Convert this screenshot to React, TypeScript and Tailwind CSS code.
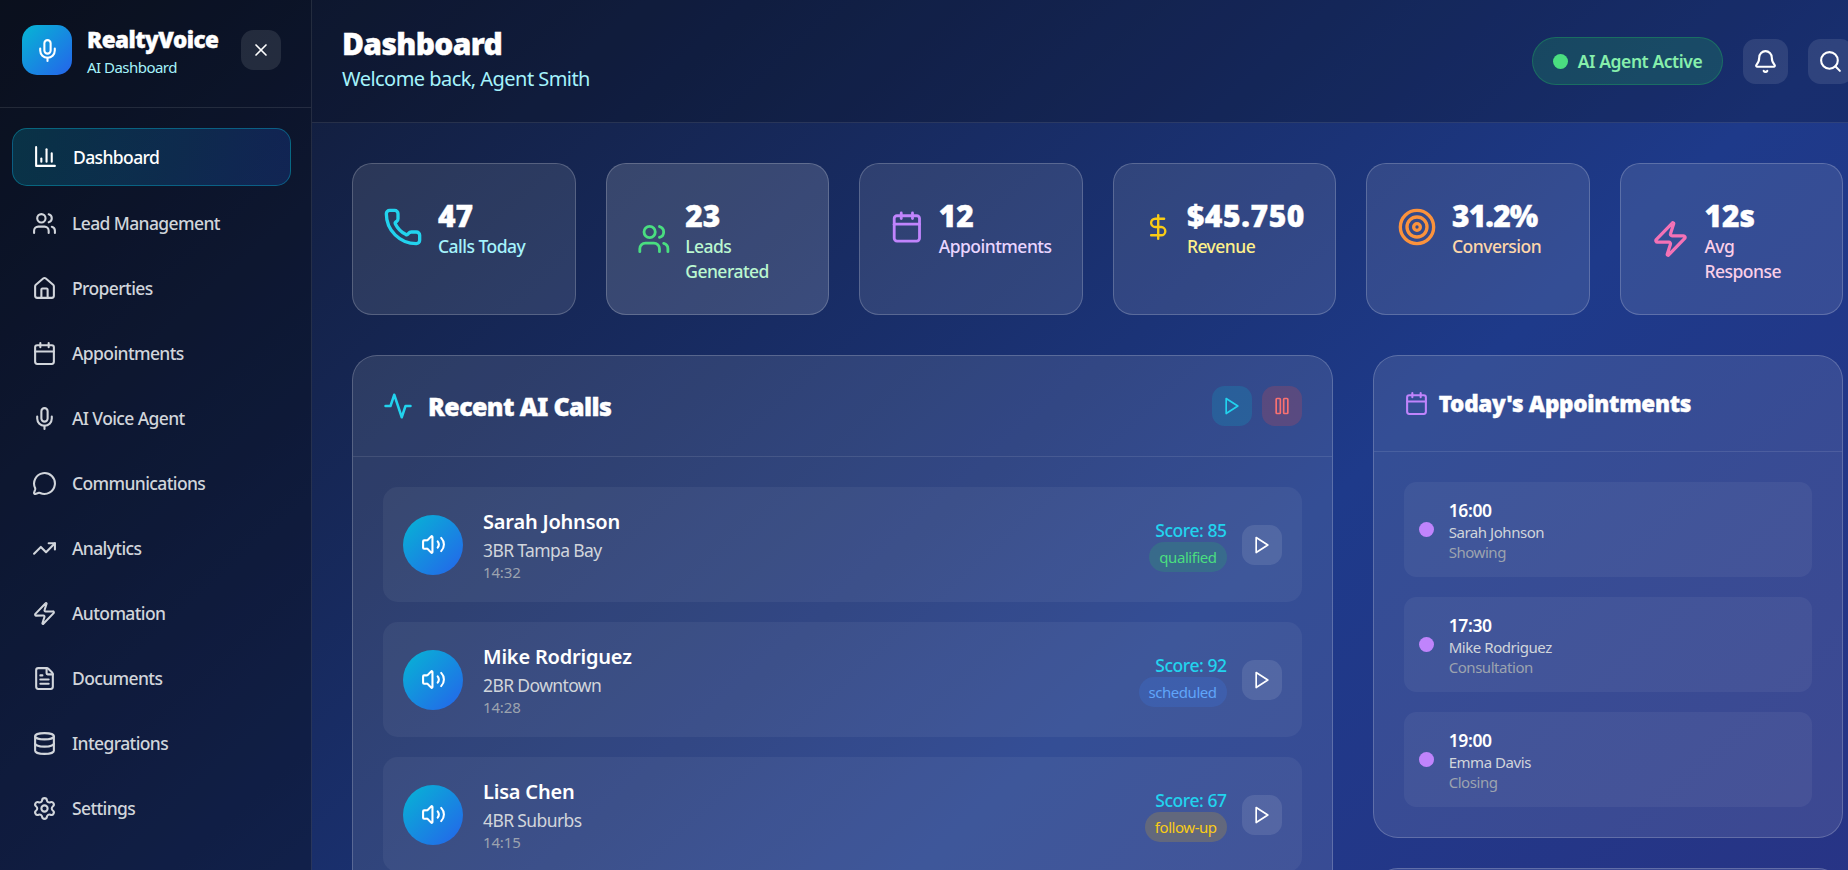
import { ReactNode } from "react";
import {
  Bell,
  Calendar,
  Database,
  DollarSign,
  FileText,
  House,
  MessageCircle,
  Mic,
  Pause,
  Phone,
  Search,
  Settings,
  Target,
  TrendingUp,
  Users,
  Volume2,
  X,
  Zap,
} from "lucide-react";

function BarsIcon({ className }: { className?: string }) {
  return (
    <svg viewBox="0 0 24 24" fill="none" stroke="currentColor" strokeWidth="2" strokeLinecap="round" strokeLinejoin="round" className={className}>
      <path d="M3 3v18h18" />
      <path d="M18 17V9" />
      <path d="M13 17V5" />
      <path d="M8 17v-3" />
    </svg>
  );
}

function PlayIcon({ className }: { className?: string }) {
  return (
    <svg viewBox="0 0 24 24" fill="none" stroke="currentColor" strokeWidth="2" strokeLinecap="round" strokeLinejoin="round" className={className}>
      <polygon points="5 3 19 12 5 21 5 3" />
    </svg>
  );
}

function PulseIcon({ className }: { className?: string }) {
  return (
    <svg viewBox="0 0 24 24" fill="none" stroke="currentColor" strokeWidth="2" strokeLinecap="round" strokeLinejoin="round" className={className}>
      <polyline points="22 12 18 12 15 21 9 3 6 12 2 12" />
    </svg>
  );
}

const navItems = [
  { label: "Dashboard", icon: <BarsIcon className="w-[25px] h-[25px]" />, active: true },
  { label: "Lead Management", icon: <Users className="w-[25px] h-[25px]" /> },
  { label: "Properties", icon: <House className="w-[25px] h-[25px]" /> },
  { label: "Appointments", icon: <Calendar className="w-[25px] h-[25px]" /> },
  { label: "AI Voice Agent", icon: <Mic className="w-[25px] h-[25px]" /> },
  { label: "Communications", icon: <MessageCircle className="w-[25px] h-[25px]" /> },
  { label: "Analytics", icon: <TrendingUp className="w-[25px] h-[25px]" /> },
  { label: "Automation", icon: <Zap className="w-[25px] h-[25px]" /> },
  { label: "Documents", icon: <FileText className="w-[25px] h-[25px]" /> },
  { label: "Integrations", icon: <Database className="w-[25px] h-[25px]" /> },
  { label: "Settings", icon: <Settings className="w-[25px] h-[25px]" /> },
];

const stats: { value: string; valueClass?: string; label: string; labelClass: string; icon: ReactNode; hover?: boolean }[] = [
  { value: "47", label: "Calls Today", labelClass: "text-[#a5f3fc]", icon: <Phone className="w-[40px] h-[40px] text-[#22d3ee]" /> },
  { value: "23", label: "Leads Generated", labelClass: "text-[#bbf7d0]", icon: <Users className="w-[40px] h-[40px] text-[#4ade80]" />, hover: true },
  { value: "12", label: "Appointments", labelClass: "text-[#e9d5ff]", icon: <Calendar className="w-[40px] h-[40px] text-[#c084fc]" /> },
  { value: "$45.750", valueClass: "tracking-[0.02em]", label: "Revenue", labelClass: "text-[#fef08a]", icon: <DollarSign className="w-[40px] h-[40px] text-[#facc15]" /> },
  { value: "31.2%", valueClass: "tracking-[-0.03em]", label: "Conversion", labelClass: "text-[#fed7aa]", icon: <Target className="w-[40px] h-[40px] text-[#fb923c]" /> },
  { value: "12s", label: "Avg Response", labelClass: "text-[#fbcfe8]", icon: <Zap className="w-[40px] h-[40px] text-[#f472b6]" /> },
];

const calls = [
  { name: "Sarah Johnson", prop: "3BR Tampa Bay", time: "14:32", score: 85, status: "qualified", statusClass: "bg-[#22c55e]/20 text-[#4ade80]" },
  { name: "Mike Rodriguez", prop: "2BR Downtown", time: "14:28", score: 92, status: "scheduled", statusClass: "bg-[#3b82f6]/20 text-[#60a5fa]" },
  { name: "Lisa Chen", prop: "4BR Suburbs", time: "14:15", score: 67, status: "follow-up", statusClass: "bg-[#eab308]/20 text-[#facc15]" },
];

const appointments = [
  { time: "16:00", name: "Sarah Johnson", type: "Showing" },
  { time: "17:30", name: "Mike Rodriguez", type: "Consultation" },
  { time: "19:00", name: "Emma Davis", type: "Closing" },
];

// Heavy headings: the installed black cut is a little lighter than the reference
const heavy = "font-black [-webkit-text-stroke:0.4px_white]";

function Sidebar() {
  return (
    <aside className="w-[312px] shrink-0 h-full bg-black/30 border-r border-white/10">
      <div className="h-[108px] border-b border-white/10 pl-[22px] pr-[30px] pt-[25px] flex items-start">
        <div className="w-[50px] h-[50px] rounded-[15px] bg-linear-to-br/srgb from-[#06b6d4] to-[#2563eb] flex items-center justify-center text-white">
          <Mic className="w-[25px] h-[25px]" />
        </div>
        <div className="ml-[15px]">
          <div className={`text-[22.5px] leading-[30px] tracking-[-0.024em] text-white ${heavy}`}>RealtyVoice</div>
          <div className="text-[15px] leading-[20px] mt-[2px] tracking-[-0.035em] text-[#a5f3fc]">AI Dashboard</div>
        </div>
        <button className="ml-auto mt-[5px] w-[40px] h-[40px] rounded-[12.5px] bg-white/10 flex items-center justify-center text-white">
          <X className="w-[20px] h-[20px]" />
        </button>
      </div>
      <nav className="pl-[12px] pr-[20px] pt-[20px] flex flex-col gap-[10px]">
        {navItems.map((item) => (
          <a
            key={item.label}
            className={
              item.active
                ? "flex items-center gap-[15px] px-[20px] h-[57.5px] rounded-[15px] border border-[#06b6d4]/40 bg-linear-to-r/srgb from-[#06b6d4]/20 to-[#2563eb]/20 text-white text-[17.5px] tracking-[-0.035em] font-medium"
                : "flex items-center gap-[15px] px-[20px] h-[55px] rounded-[15px] text-[#d1d5db] text-[17.5px] tracking-[-0.035em] font-medium"
            }
          >
            {item.icon}
            <span>{item.label}</span>
          </a>
        ))}
      </nav>
    </aside>
  );
}

function Header() {
  return (
    <header className="h-[123px] bg-black/20 border-b border-white/10 px-[30px] flex items-center justify-between">
      <div className="pb-[5px]">
        <h1 className={`text-[30px] leading-[40px] tracking-[-0.022em] text-white ${heavy}`}>Dashboard</h1>
        <p className="text-[20px] leading-[30px] tracking-[-0.027em] text-[#a5f3fc]">Welcome back, Agent Smith</p>
      </div>
      <div className="flex items-center gap-[20px]">
        <div className="h-[47.5px] w-[191px] rounded-full bg-[#22c55e]/20 border border-[#22c55e]/30 flex items-center justify-center gap-[10px]">
          <span className="w-[15px] h-[15px] rounded-full bg-[#4ade80]" />
          <span className="text-[17.5px] font-semibold tracking-[-0.025em] text-[#86efac]">AI Agent Active</span>
        </div>
        <button className="w-[45px] h-[45px] rounded-[12.5px] bg-white/10 flex items-center justify-center text-white">
          <Bell className="w-[25px] h-[25px]" />
        </button>
        <button className="w-[45px] h-[45px] rounded-[12.5px] bg-white/10 flex items-center justify-center text-white">
          <Search className="w-[25px] h-[25px]" />
        </button>
      </div>
    </header>
  );
}

function StatCards() {
  return (
    <div className="grid grid-cols-6 gap-[30px]">
      {stats.map((s) => (
        <div
          key={s.label}
          className={`h-[152px] rounded-[20px] border border-white/20 p-[30px] ${s.hover ? "bg-white/15" : "bg-white/10"}`}
        >
          <div className="flex items-center gap-[15px]">
            {s.icon}
            <div className="pt-[1.5px]">
              <div className={`text-[30px] leading-[40px] text-white ${heavy} ${s.valueClass ?? ""}`}>{s.value}</div>
              <div className={`text-[17.5px] leading-[25px] -mt-[1.5px] tracking-[-0.03em] font-medium ${s.labelClass}`}>{s.label}</div>
            </div>
          </div>
        </div>
      ))}
    </div>
  );
}

function RecentCalls() {
  return (
    <div className="rounded-[25px] bg-white/10 border border-white/20">
      <div className="h-[101px] border-b border-white/10 px-[30px] flex items-center justify-between">
        <div className="flex items-center gap-[15px]">
          <PulseIcon className="w-[30px] h-[30px] text-[#22d3ee]" />
          <h2 className={`text-[25px] mt-[2px] tracking-[-0.025em] text-white ${heavy}`}>Recent AI Calls</h2>
        </div>
        <div className="flex items-center gap-[10px]">
          <button className="w-[40px] h-[40px] rounded-[12.5px] bg-[#06b6d4]/20 flex items-center justify-center text-[#22d3ee]">
            <PlayIcon className="w-[20px] h-[20px]" />
          </button>
          <button className="w-[40px] h-[40px] rounded-[12.5px] bg-[#ef4444]/20 flex items-center justify-center text-[#f87171]">
            <Pause className="w-[20px] h-[20px]" />
          </button>
        </div>
      </div>
      <div className="p-[30px] flex flex-col gap-[20px]">
        {calls.map((c) => (
          <div key={c.name} className="h-[115px] rounded-[15px] bg-white/5 px-[20px] flex items-center">
            <div className="w-[60px] h-[60px] rounded-full bg-linear-to-br/srgb from-[#06b6d4] to-[#2563eb] flex items-center justify-center text-white">
              <Volume2 className="w-[25px] h-[25px]" />
            </div>
            <div className="ml-[20px]">
              <div className="text-[20px] leading-[30px] tracking-[-0.01em] font-semibold text-white">{c.name}</div>
              <div className="text-[17.5px] leading-[25px] tracking-[-0.035em] mt-[1px] -mb-[1px] text-[#d1d5db]">{c.prop}</div>
              <div className="text-[15px] leading-[20px] tracking-[-0.01em] text-[#9ca3af]">{c.time}</div>
            </div>
            <div className="ml-auto flex flex-col items-end">
              <div className="text-[17.5px] leading-[25px] tracking-[-0.025em] font-medium text-[#22d3ee]">Score: {c.score}</div>
              <span className={`text-[15px] leading-[20px] tracking-[-0.03em] px-[10px] py-[5px] rounded-full -mt-[1px] ${c.statusClass}`}>{c.status}</span>
            </div>
            <button className="ml-[15px] w-[40px] h-[40px] rounded-[12.5px] bg-white/10 flex items-center justify-center text-white">
              <PlayIcon className="w-[20px] h-[20px]" />
            </button>
          </div>
        ))}
      </div>
    </div>
  );
}

function TodayAppointments() {
  return (
    <div className="rounded-[25px] bg-white/10 border border-white/20">
      <div className="h-[96px] border-b border-white/10 px-[30px] flex items-center gap-[10px]">
        <Calendar className="w-[25px] h-[25px] text-[#c084fc]" />
        <h3 className={`text-[22.5px] tracking-[-0.013em] text-white ${heavy}`}>Today's Appointments</h3>
      </div>
      <div className="p-[30px] flex flex-col gap-[20px]">
        {appointments.map((a) => (
          <div key={a.time} className="h-[95px] rounded-[12.5px] bg-white/5 px-[15px] flex items-center gap-[15px]">
            <span className="w-[15px] h-[15px] rounded-full bg-[#c084fc]" />
            <div>
              <div className="text-[17.5px] leading-[25px] font-semibold tracking-[-0.02em] mt-[1px] -mb-[1px] text-white">{a.time}</div>
              <div className="text-[15px] leading-[20px] tracking-[-0.03em] text-[#d1d5db]">{a.name}</div>
              <div className="text-[15px] leading-[20px] tracking-[-0.03em] text-[#9ca3af]">{a.type}</div>
            </div>
          </div>
        ))}
      </div>
    </div>
  );
}

export default function App() {
  return (
    <div className="w-[1848px] h-[870px] overflow-hidden" style={{ fontFamily: '"Noto Sans", "Open Sans", sans-serif' }}>
      <div className="w-[1883px] h-[1700px] flex bg-linear-to-br/srgb from-[#0f172a] via-[#1e3a8a] to-[#312e81]">
        <Sidebar />
        <main className="flex-1 min-w-0">
          <Header />
          <div className="px-[40px] pt-[40px]">
            <StatCards />
            <div className="mt-[40px] grid grid-cols-3 gap-[40px] items-start">
              <div className="col-span-2">
                <RecentCalls />
              </div>
              <div className="flex flex-col gap-[30px]">
                <TodayAppointments />
                <div className="h-[300px] rounded-[25px] bg-white/10 border border-white/20" />
              </div>
            </div>
          </div>
        </main>
      </div>
    </div>
  );
}
